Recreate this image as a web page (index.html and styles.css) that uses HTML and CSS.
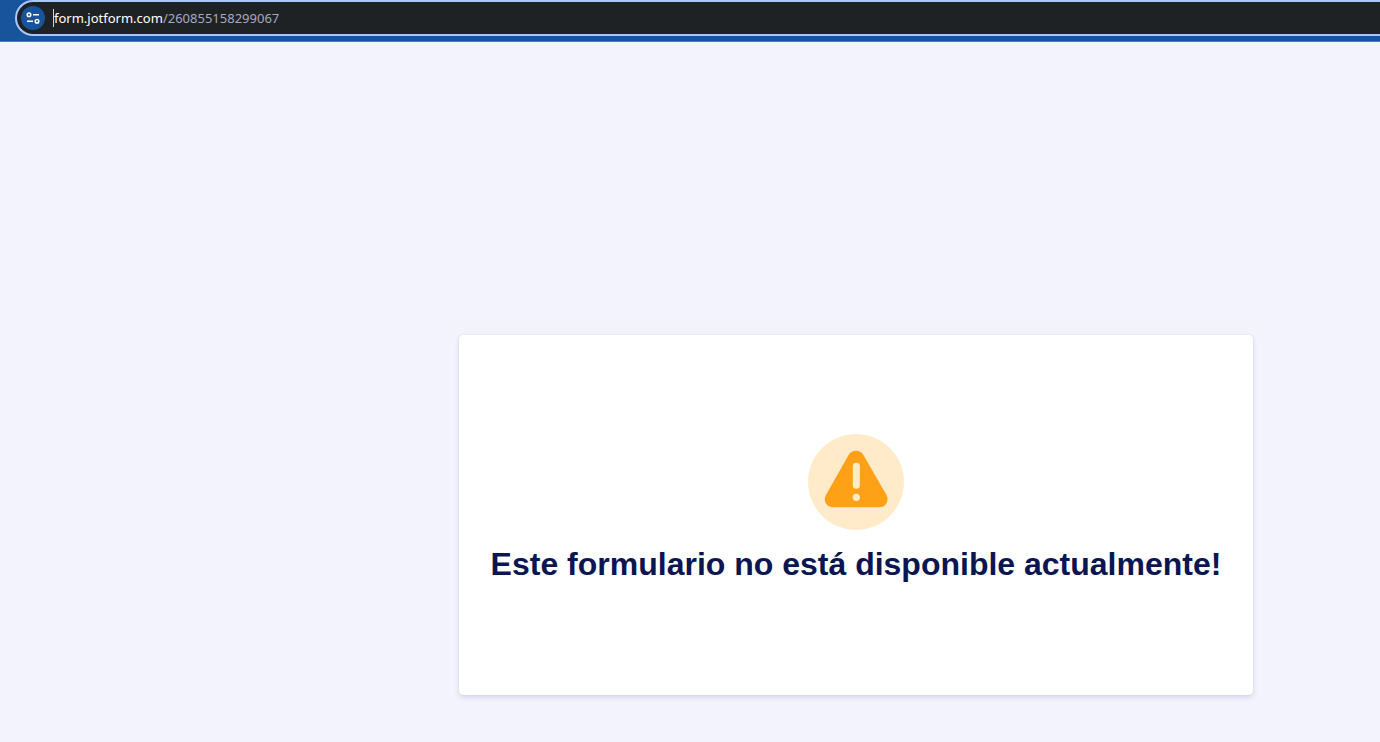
FILE: index.html
```html
<!DOCTYPE html>
<html lang="es">
<head>
    <meta charset="UTF-8">
    <meta name="viewport" content="width=device-width, initial-scale=1.0">
    <title>Formulario no disponible</title>
    <link rel="stylesheet" href="styles.css">
</head>
<body>
    <header class="toolbar">
        <div class="address-bar">
            <button type="button" class="site-info" aria-label="Información del sitio">
                <svg width="14" height="12" viewBox="0 0 14 12" fill="none" stroke="#fff">
                    <circle cx="3" cy="2.7" r="1.8" stroke-width="1.5"/>
                    <path d="M7 2.7h6M1 9.3h6" stroke-width="1.5"/>
                    <circle cx="11" cy="9.3" r="1.8" stroke-width="1.5"/>
                </svg>
            </button>
            <div class="url" role="textbox" contenteditable="true" spellcheck="false" aria-label="Dirección"><span class="domain">form.jotform.com</span><span class="path">/260855158299067</span></div>
        </div>
    </header>

    <main class="content">
        <section class="card">
            <svg class="warning" width="96" height="96" viewBox="0 0 96 96">
                <circle cx="48" cy="48" r="48" fill="#ffebc9"/>
                <path d="M40.7 20.8C44 15.3 52 15.3 55.3 20.8L78.6 61.2C81.4 66.8 77.8 73.2 71.5 73.2H25C18.5 73.2 14.8 66.8 17.8 61.2Z" fill="#ffa116"/>
                <path d="M48.3 32.2v19" stroke="#ffebc9" stroke-width="7" stroke-linecap="round"/>
                <circle cx="48.3" cy="63.3" r="3.6" fill="#ffebc9"/>
            </svg>
            <h1>Este formulario no está disponible actualmente!</h1>
        </section>
    </main>
</body>
</html>
```

FILE: styles.css
```css
body {
    margin: 0;
    min-height: 100vh;
    display: flex;
    flex-direction: column;
    background-color: #f3f3fe;
    font-family: "Liberation Sans", Arial, sans-serif;
}
.toolbar {
    padding: 0 0 5px 15px;
    background-color: #17549b;
    border-bottom: 1px solid #4c7db8;
}
.address-bar {
    display: flex;
    align-items: center;
    gap: 8px;
    height: 36px;
    box-sizing: border-box;
    padding-left: 4px;
    background-color: #1f2225;
    border: 2px solid #a8c7fa;
    border-right: none;
    border-radius: 18px 0 0 18px;
}
.site-info {
    display: flex;
    justify-content: center;
    align-items: center;
    width: 24px;
    height: 24px;
    padding: 0;
    background-color: #17549b;
    border: none;
    border-radius: 50%;
    cursor: pointer;
}
.url {
    flex: 1;
    font-family: "Noto Sans", "Segoe UI", sans-serif;
    font-size: 13px;
    line-height: 18px;
    white-space: nowrap;
    border-left: 1px solid #d0d3d8;
    outline: none;
}
.domain {
    color: #fff;
}
.path {
    color: #a3acc0;
}
.content {
    flex: 1;
    display: flex;
    justify-content: center;
    align-items: flex-end;
    box-sizing: border-box;
    padding: 40px 0 47px 332px;
}
.card {
    display: flex;
    flex-direction: column;
    justify-content: center;
    align-items: center;
    gap: 16px;
    min-height: 360px;
    box-sizing: border-box;
    padding: 32px 32px 46px;
    background-color: #fff;
    border-radius: 4px;
    box-shadow: 0 2px 5px rgba(10, 21, 81, 0.14), 0 0 1px rgba(10, 21, 81, 0.14);
}
h1 {
    margin: 0;
    color: #0a1551;
    font-size: 32px;
    line-height: 36px;
    text-align: center;
}
```
